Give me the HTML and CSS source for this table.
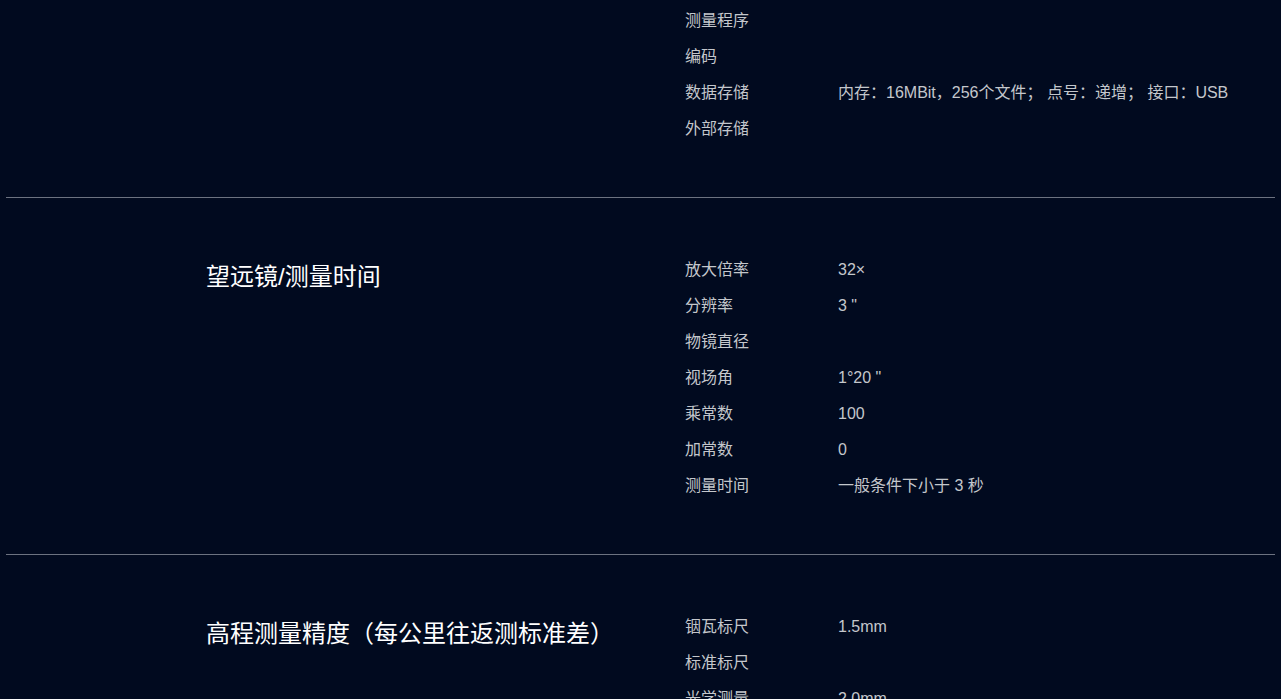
FILE: index.html
```html
<!DOCTYPE html>
<html lang="zh-CN">
<head>
<meta charset="utf-8">
<title>技术参数</title>
<link rel="stylesheet" href="styles.css">
</head>
<body>
<main class="specs">
  <section class="group group-first">
    <h2 class="group-title"></h2>
    <dl class="rows">
      <div class="row"><dt>测量程序</dt><dd></dd></div>
      <div class="row"><dt>编码</dt><dd></dd></div>
      <div class="row"><dt>数据存储</dt><dd>内存：16MBit，256个文件； 点号：递增； 接口：USB</dd></div>
      <div class="row"><dt>外部存储</dt><dd></dd></div>
    </dl>
  </section>
  <section class="group">
    <h2 class="group-title">望远镜/测量时间</h2>
    <dl class="rows">
      <div class="row"><dt>放大倍率</dt><dd>32×</dd></div>
      <div class="row"><dt>分辨率</dt><dd>3 "</dd></div>
      <div class="row"><dt>物镜直径</dt><dd></dd></div>
      <div class="row"><dt>视场角</dt><dd>1°20 "</dd></div>
      <div class="row"><dt>乘常数</dt><dd>100</dd></div>
      <div class="row"><dt>加常数</dt><dd>0</dd></div>
      <div class="row"><dt>测量时间</dt><dd>一般条件下小于 3 秒</dd></div>
    </dl>
  </section>
  <section class="group">
    <h2 class="group-title">高程测量精度（每公里往返测标准差）</h2>
    <dl class="rows">
      <div class="row"><dt>铟瓦标尺</dt><dd>1.5mm</dd></div>
      <div class="row"><dt>标准标尺</dt><dd></dd></div>
      <div class="row"><dt>光学测量</dt><dd>2.0mm</dd></div>
    </dl>
  </section>
</main>
</body>
</html>
```
FILE: styles.css
```css
html, body {
  margin: 0;
  padding: 0;
  background: #010a1f;
  height: 699px;
  overflow: hidden;
}
body {
  font-family: "Liberation Sans", "Noto Sans CJK SC", sans-serif;
  color: #c4c7cc;
}
.specs {
  margin: 0 6px;
}
.group {
  display: flex;
  padding: 54px 0 50px 200px;
  border-bottom: 1px solid #6c7280;
}
.group-first {
  padding-top: 3px;
}
.group-title {
  width: 479px;
  flex: none;
  margin: 7px 0 0;
  font-size: 24px;
  line-height: 36px;
  font-weight: normal;
  color: #ffffff;
}
.rows {
  margin: 0;
  flex: 1;
}
.row {
  display: flex;
  height: 36px;
  line-height: 36px;
  font-size: 16px;
}
.row dt {
  width: 153px;
  flex: none;
}
.row dd {
  margin: 0;
}
```
